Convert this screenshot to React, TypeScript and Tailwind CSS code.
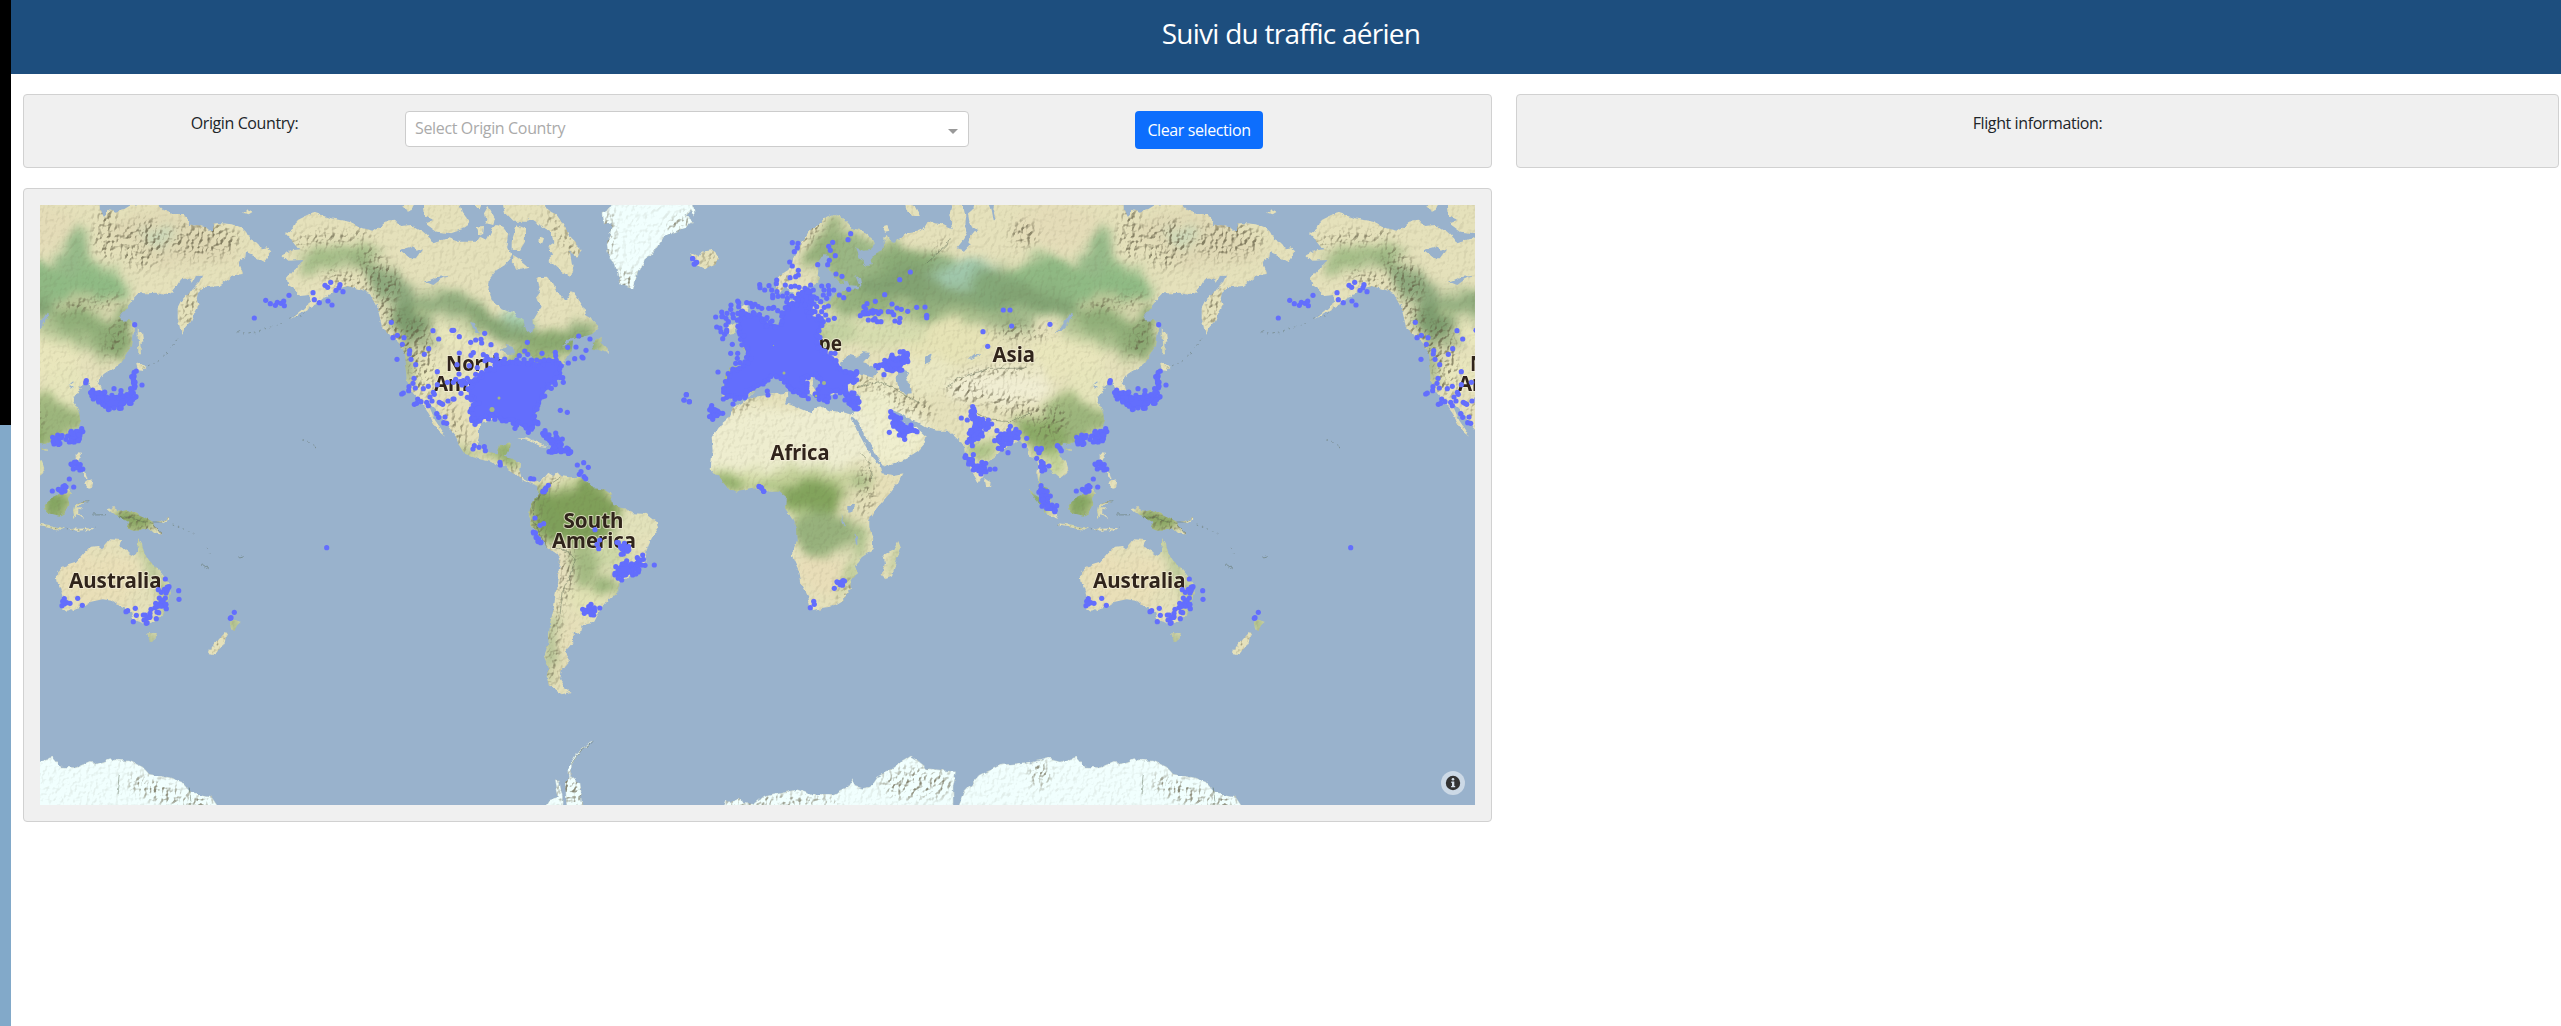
import React from "react";

type Frame = [number, number];

// Tile origins; coordinates below are thirds of a pixel from these corners.
const A: Frame = [30, 190];
const B: Frame = [380, 190];
const C: Frame = [480, 450];
const D: Frame = [680, 190];
const E: Frame = [680, 440];
const F: Frame = [1030, 440];
const G: Frame = [980, 190];

const seg = ([ox, oy]: Frame, s: string) =>
  s
    .trim()
    .split(/\s+/)
    .map((p) => {
      const [x, y] = p.split(",").map(Number);
      return `${(ox + x / 3).toFixed(1)},${(oy + y / 3).toFixed(1)}`;
    })
    .join(" ");

const EURASIA = [
  seg(D, "440,80 462,72 480,78 495,92 515,115 545,120 575,145 583,165 575,180 550,182 525,172 530,185 535,205 550,212 560,228 575,225 572,210 588,190 610,180 612,165 610,145 620,138 628,150 640,155 660,145 680,130 712,125 730,118 745,92 765,100 785,103 800,110 818,118 812,95 808,75 820,30"),
  seg(G, "0,30 430,30 432,60 440,80 450,75 450,55 480,65 500,60 525,45 575,40 605,45 620,60 650,72 685,72 700,90 698,108 720,105 750,112 765,125 770,125 775,100 795,100 830,103 855,112 870,125 880,145 905,160 915,175 935,172 950,185 935,200 925,215 905,205 890,195 870,185 868,205 848,215 862,252 835,255 815,270 790,288 765,290 745,292 725,310 722,330 728,345 715,370 705,395 688,415 678,432 672,415 665,385 665,355 675,335 695,315 710,295 730,275 738,257 720,258 708,280 700,265 675,268 665,285 645,310 625,315 600,308 575,310 550,310 530,330 510,355 490,380 500,392 520,390 535,405 532,440 528,465 515,490 495,520 475,538 455,545 440,555 430,570 425,580 435,590 440,605 430,625 408,628 405,605 400,590 398,575 385,580 375,590 370,602 345,598 355,590 338,585 355,572 345,572 338,585 348,598 378,598 362,612 350,630 362,650 370,672 372,690 365,710 345,730 320,745 295,750 265,765 250,762 240,770 232,782 240,800 258,815 265,835 258,850 240,865 228,855 215,845 200,830 190,835 180,850 178,870 190,890 202,893 213,910 216,930 210,950 195,935 183,910 175,885 172,850 175,830 170,805 160,800 145,795 140,775 130,765 120,745 105,755 85,770 60,785 45,800 25,815"),
  seg(D, "915,835 910,860 895,880 885,860 870,835 858,800 855,765 845,760 825,740 805,722 770,722 735,712 715,700 695,690 668,672 640,660 650,685 672,700 690,715 710,710 720,722 740,740 735,760 715,782 680,805 650,820 610,833 600,820 585,790 565,755 545,715 528,690 515,678 530,660 540,655 538,615 490,608 450,612 435,600 430,570 400,560 395,580 410,610 395,615 370,590 350,550 330,540 310,545 330,570 355,590 350,610 335,600 320,580 295,555 275,555 255,560 240,575 225,600 205,620 180,625 165,632 150,625 125,620 135,580 140,550 150,530 180,528 200,525 205,500 190,470 200,455 235,440 270,415 300,400 320,385 325,355 315,335 345,330 360,345 380,350 420,340 450,335 465,310 500,300 535,298 540,288 500,285 480,278 465,262 450,245 440,230 450,205 450,195 430,193 415,215 418,240 415,280 385,290 370,305 345,322 330,300 315,290 300,310 285,300 285,275 300,255 325,240 340,210 360,170 385,130 410,105"),
].join(" ");

const AFRICA = [
  seg(D, "185,640 215,622 260,615 320,608 325,620 318,640 350,650 395,670 405,655 430,652 450,662 480,665 520,675 515,685 530,720 555,765 575,800 600,830 605,850 640,855 668,850 655,880 630,910"),
  seg(E, "620,170 590,205 568,240 568,265 580,290 578,330 545,352 528,375 537,400 512,420 512,445 490,480 460,498 430,503 400,510 390,500 385,470 365,435 358,395 335,345 350,305 348,265 335,235 315,205 318,170 300,155 270,155 230,145 170,155 140,140 115,110 92,85 98,30 95,-5"),
  seg(D, "120,705 150,680 160,655"),
].join(" ");

const NORTH_AMERICA = [
  seg(A, "768,132 790,115 800,90 825,78 850,67 900,85 960,95 1000,115 1030,122"),
  seg(B, "0,108 15,95 45,92 60,108 95,105 130,125 150,145 160,160 205,145 235,155 290,155 300,140 320,150 335,120 350,105 370,110 385,130 380,160 395,200 375,225 350,240 330,265 325,300 335,330 365,355 400,370 430,390 440,420 455,432 462,410 460,390 475,365 485,350 465,320 480,300 472,262 500,260 520,280 530,310 560,330 575,300 590,320 610,350 615,375 640,390 655,405 645,430 610,440 560,450 545,470 580,450 575,480 560,510 540,525 545,550 510,580 490,610 480,650 465,670 472,700 450,725 435,715 425,690 370,690 330,690 300,700 300,735 295,765 320,785 350,790 360,765 390,760 388,775 375,800 400,808 420,820 418,840 425,865 445,875 470,870 490,885 480,890 455,882 425,870 400,845 375,830 345,820 300,808 250,790 235,765 235,745 205,710 180,670 155,645 148,650 165,690 198,740 180,725 160,700 145,665 125,640 95,605 80,570 75,520 70,480 50,455 25,430 5,410"),
  seg(A, "1050,385 1040,345 1020,310 990,298 950,288 925,295 900,315 880,325 855,345 820,365 780,388 820,355 845,335 840,315 810,318 790,295 775,285 770,265 790,240 810,225 820,210 775,212 757,195 790,180 808,178 790,155"),
].join(" ");

const SOUTH_AMERICA = seg(C, "155,92 175,95 195,80 205,68 220,78 235,66 240,78 270,82 300,80 320,92 340,115 370,118 390,130 400,165 430,175 460,190 500,192 530,215 535,235 515,265 500,300 495,340 470,370 435,385 415,400 415,425 385,450 350,495 340,515 305,525 300,545 278,550 280,575 255,605 270,630 245,660 240,690 255,715 272,726 245,733 210,710 200,680 205,650 192,620 205,580 210,520 222,470 232,390 240,340 235,315 200,290 170,250 150,215 145,200 155,160 175,130 175,110");

const ISLANDS = [
  seg(B, "70,45 105,30 95,60 80,65"),
  seg(B, "130,30 235,30 245,65 268,95 255,115 210,130 170,125 135,100 160,90 135,80"),
  seg(B, "280,30 310,30 300,55 285,50"),
  seg(B, "312,70 325,48 345,85 340,105 318,100"),
  seg(B, "290,110 312,108 310,128 298,135"),
  seg(B, "365,30 430,30 455,75 440,95 400,95 375,70"),
  seg(B, "400,30 490,45 530,75 555,110 570,145 605,180 590,200 570,185 575,220 580,240 572,262 540,240 505,210 520,195 505,170 520,160 515,130 490,110 465,95 440,80 420,60"),
  seg(B, "400,195 415,205 445,230 410,240 398,225"),
  seg(B, "410,105 435,115 435,155 420,180 395,180 395,150"),
  seg(B, "480,140 495,145 490,160 478,155"),
  seg(B, "650,450 665,440 665,458 683,475 683,488 660,482 635,475"),
  seg(B, "415,748 440,742 470,755 502,770 480,768 450,753"),
  seg(D, "35,215 30,190 55,200 65,185 100,180 118,200 105,220 75,238 50,225"),
  seg(D, "185,350 205,340 200,365 215,385 230,410 245,425 240,440 200,445 175,450 190,430 175,410 190,390 180,370"),
  seg(D, "145,410 165,400 172,412 165,428 145,432"),
  seg(D, "672,30 705,50 720,78 700,78 680,60"),
  seg(D, "608,112 622,108 628,122 615,125"),
  seg(E, "655,303 663,325 650,360 635,410 615,418 605,400 615,370 610,345 640,330"),
  seg(E, "915,115 932,125 930,140 918,142"),
  seg(F, "-5,148 20,165 45,185 75,215 88,240 60,230 40,205 15,175"),
  seg(F, "85,250 130,255 180,265 170,270 130,264 90,257"),
  seg(F, "190,264 215,266 262,264 240,280 245,270 210,272"),
  seg(F, "115,190 125,180 155,165 170,150 182,138 195,155 185,175 190,190 175,220 160,227 130,220 118,205"),
  seg(F, "203,198 215,188 250,185 225,193 212,205 235,205 215,215 235,238 222,230 212,222 205,235 201,215"),
  seg(F, "305,205 325,198 330,212 345,215 365,210 410,228 440,245 455,270 468,285 445,280 425,262 405,272 385,272 362,265 370,245 345,232 325,222"),
  seg(F, "450,245 475,240 488,230 490,238 472,248"),
  seg(F, "155,395 170,380 210,368 235,340 255,320 275,318 285,325 295,315 310,298 345,300 340,320 360,335 385,348 393,335 397,290 408,310 415,340 430,365 455,385 475,410 490,435 495,460 480,495 465,530 440,545 420,553 400,545 385,540 375,520 358,508 345,500 320,482 290,478 255,485 235,498 210,503 185,515 165,500 170,470 155,425 152,405"),
  seg(F, "420,580 450,578 445,600 432,608"),
  seg(F, "672,548 685,540 707,545 685,570 675,565"),
  seg(F, "655,580 668,582 645,625 630,643 608,640 612,628"),
  seg(G, "362,787 378,788 372,808 362,812"),
  seg(G, "385,880 400,868 412,876 408,890 395,893"),
  seg(G, "378,838 392,850 398,868 388,860"),
  seg(G, "545,415 558,430 562,455 553,465 555,490 547,490 545,450"),
  seg(G, "540,520 572,530 560,542 545,540"),
  seg(G, "255,775 277,773 268,783"),
  seg(G, "862,68 872,58 888,65 875,73"),
];

const ICE = [
  seg(B, "668,70 690,55 705,30 940,30 945,80 930,60 915,75 942,95 915,115 885,125 850,145 820,190 795,205 775,245 760,298 730,288 715,265 705,225 685,200 680,160 690,130 695,100 672,105"),
  seg(C, "340,872 300,905 275,945 275,980 298,1000 308,1075 260,1075 255,1000 268,985 265,950 290,910 330,875"),
  seg(C, "225,988 238,992 248,1040 246,1075 190,1075 205,1050 235,1040"),
  seg(E, "130,1105 140,1080 150,1088 180,1070 185,1085 225,1090 250,1070 320,1055 350,1048 400,1065 460,1065 500,1045 518,1015 525,1038 545,1045 570,1040 590,1010 640,985 665,965 690,950 715,965 740,985 828,995 820,1040 820,1105"),
  [seg(E, "832,1105 850,1060 900,1005 960,975 1050,965"), seg(F, "0,968 50,955 90,965 140,950 165,980 210,982 255,963 270,972 310,958 370,962 410,980 430,1002 490,1012 530,1025 555,1055 580,1062 615,1068 640,1105")].join(" "),
];

const LAKES = [
  seg(D, "842,30 848,45 856,75 853,105 862,125 850,150 830,175 852,182 868,165 870,140 885,122 895,130 892,118 876,113 866,95 862,75 880,60 885,30"),
  seg(D, "925,30 935,60 942,95 948,80 940,55 945,30"),
  seg(D, "490,505 510,495 530,500 550,487 570,488 560,505 550,515 580,530 592,545 580,563 550,555 530,545 510,548 485,540 480,520"),
  seg(D, "652,545 670,538 690,545 675,570 692,585 695,610 675,612 655,590 650,565"),
  seg(D, "735,500 755,490 750,515 735,522"),
  seg(D, "862,508 880,492 908,493 885,497"),
  seg(D, "525,255 540,265 545,290 535,280"),
  seg(D, "490,270 505,275 512,290 495,292"),
  seg(E, "505,195 525,195 520,215 505,218"),
  seg(E, "485,220 492,250 500,265 488,252"),
  seg(E, "523,275 532,295 532,318 527,310"),
  seg(G, "222,432 245,410 262,385 272,368 277,378 262,405 245,422"),
  seg(B, "60,180 95,170 110,185 130,178 110,205 90,205"),
  seg(B, "135,275 165,262 205,258 180,270 160,285"),
  seg(B, "273,395 285,400 292,420 305,430 290,430"),
  seg(B, "360,485 380,465 400,470 405,490 380,492"),
  seg(B, "395,510 420,490 460,500 440,520"),
];

type Blob = [Frame, number, number, number, number, string, number?];
const BLOBS: Blob[] = [
  [D, 600, 300, 190, 80, "#a9be8c", 0],
  [D, 800, 350, 220, 50, "#a9be8c", 0],
  [D, 660, 245, 160, 75, "#8aab76", -5],
  [D, 500, 200, 110, 75, "#9ab684", 40],
  [D, 430, 170, 40, 90, "#95b07b", 35],
  [D, 560, 320, 80, 60, "#93b07c", 0],
  [D, 740, 290, 200, 55, "#82a272", 0],
  [D, 860, 320, 150, 35, "#86a676", 0],
  [D, 870, 255, 110, 48, "#a0c7ab", 0],
  [D, 735, 370, 18, 60, "#8fae7b", 0],
  [D, 1000, 300, 120, 65, "#7f9f70", 20],
  [D, 480, 420, 60, 45, "#c3d1a0", 0],
  [D, 800, 450, 160, 55, "#e6e3b6", 0],
  [D, 620, 430, 110, 35, "#d5dcae", 0],
  [D, 740, 550, 90, 60, "#e9e7c2", 0],
  [D, 590, 640, 80, 60, "#ececca", 0],
  [D, 640, 740, 110, 80, "#efeece", 0],
  [G, 230, 300, 250, 80, "#a3bf8e", 0],
  [G, 200, 270, 150, 65, "#8fb883", 0],
  [G, 400, 280, 115, 75, "#8fba84", 8],
  [G, 350, 190, 40, 80, "#95b988", 20],
  [G, 60, 300, 90, 60, "#84a878", 0],
  [G, 170, 325, 120, 38, "#82a373", 8],
  [G, 95, 400, 70, 28, "#9ab284", 0],
  [G, 370, 410, 120, 60, "#a6bd8a", 10],
  [G, 370, 405, 90, 40, "#8fae78", 20],
  [G, 490, 440, 45, 90, "#8aa872", 20],
  [G, 400, 340, 110, 14, "#cdcda2", 0],
  [G, 230, 110, 130, 70, "#e4dcb8", 0],
  [G, 650, 150, 190, 70, "#dfd8b4", 10],
  [G, 610, 140, 60, 25, "#cbd8b8", 0],
  [G, 250, 500, 110, 60, "#e9e6bc", 0],
  [G, 330, 600, 60, 70, "#e6e5bb", 0],
  [G, 60, 590, 150, 55, "#f0edd2", 0],
  [G, 250, 645, 45, 35, "#a3ba80", 0],
  [G, 290, 700, 110, 50, "#9cb57c", -10],
  [G, 190, 740, 90, 55, "#8aa966", 20],
  [G, 230, 810, 35, 40, "#bccf92", 0],
  [G, 0, 780, 40, 35, "#a9c184", 0],
  [G, 190, 900, 30, 40, "#8aab6b", 0],
  [D, 180, 560, 90, 60, "#aebf8a", 0],
  [D, 300, 450, 150, 70, "#b3c48f", 0],
  [D, 260, 770, 220, 120, "#eeedcf", 0],
  [D, 440, 740, 140, 100, "#eeedd0", 0],
  [E, 250, 110, 170, 25, "#d3dba7", 0],
  [E, 400, 115, 140, 25, "#c5d19a", 0],
  [E, 150, 135, 50, 24, "#8fae68", 20],
  [E, 260, 140, 60, 16, "#a8c080", 0],
  [E, 400, 175, 105, 52, "#82a35c", 0],
  [E, 430, 275, 95, 60, "#97b17c", 0],
  [E, 350, 215, 25, 20, "#b7cb8f", 0],
  [E, 550, 125, 30, 35, "#9db67c", 0],
  [E, 610, 150, 60, 60, "#e6dfb8", -40],
  [E, 512, 200, 25, 55, "#dfdcb4", 0],
  [E, 545, 300, 25, 45, "#a9c08a", 0],
  [E, 430, 400, 90, 60, "#e8ddb8", 30],
  [E, 515, 410, 20, 60, "#bccb98", 20],
  [E, 645, 350, 10, 60, "#a3ba85", 12],
  [A, 930, 195, 130, 35, "#b3c496", -8],
  [A, 930, 185, 110, 20, "#a0bb84", -8],
  [A, 880, 215, 80, 16, "#a5bd89", -20],
  [A, 1040, 245, 90, 28, "#93ae7b", 25],
  [B, 60, 310, 120, 45, "#8ca87c", 35],
  [B, 90, 400, 55, 80, "#7d9c6e", -40],
  [B, 220, 345, 130, 36, "#a9be90", 12],
  [B, 220, 350, 120, 20, "#8ca97a", 12],
  [B, 360, 415, 130, 34, "#86a573", 20],
  [B, 400, 385, 42, 20, "#a9d3b8", 35],
  [B, 540, 460, 130, 42, "#8aa970", 0],
  [B, 620, 410, 40, 28, "#93ae7c", 0],
  [B, 230, 435, 90, 42, "#e9e7bd", 15],
  [B, 130, 370, 25, 15, "#b5c794", 0],
  [B, 85, 530, 14, 80, "#8fa87a", 0],
  [B, 190, 560, 90, 50, "#e8e6bd", 0],
  [B, 240, 680, 40, 60, "#e6e0b8", -20],
  [B, 450, 580, 120, 100, "#9db57c", 0],
  [B, 370, 790, 50, 30, "#93b06e", 20],
  [B, 250, 780, 60, 14, "#9fb67a", 20],
  [C, 290, 180, 130, 100, "#7f9f59", 10],
  [C, 200, 210, 45, 80, "#7e9f5a", -20],
  [C, 255, 100, 55, 18, "#dcdfb0", -10],
  [C, 460, 235, 75, 50, "#e1e1ba", 0],
  [C, 390, 310, 70, 50, "#cdd7a6", 0],
  [C, 310, 350, 40, 65, "#a2b981", 0],
  [C, 385, 405, 42, 24, "#94b176", 0],
  [C, 325, 460, 60, 45, "#e1e2b4", 0],
  [C, 260, 360, 22, 70, "#e7dfbe", 0],
  [C, 210, 590, 12, 100, "#95b07d", 0],
  [C, 258, 600, 30, 100, "#e5deb8", 10],
  [F, 155, 190, 45, 45, "#83a460", 0],
  [F, 385, 245, 70, 30, "#82a15c", 15],
  [F, 280, 420, 125, 85, "#e9dfb8", 0],
  [F, 440, 385, 14, 65, "#a9c089", -35],
  [F, 402, 320, 12, 35, "#a9c089", 0],
  [F, 478, 480, 14, 75, "#9db77e", 5],
  [F, 435, 592, 22, 22, "#8faa78", 0],
  [F, 690, 555, 24, 20, "#98b27a", 0],
  [F, 30, 190, 35, 45, "#8cab70", 0],
];

// Ranges where the relief shading is strong.
const RANGES: Blob[] = [
  [G, 560, 160, 70, 75, "", 35],
  [G, 450, 130, 35, 80, "", 0],
  [G, 740, 150, 110, 55, "", 0],
  [G, 700, 350, 20, 60, "", 15],
  [G, 400, 340, 110, 16, "", -8],
  [G, 130, 130, 40, 40, ""],
  [G, 120, 430, 90, 22, ""],
  [G, 60, 545, 120, 14, "", -5],
  [G, 110, 650, 110, 30, "", 15],
  [G, 210, 690, 50, 50, ""],
  [G, 480, 440, 25, 70, "", 25],
  [D, 400, 120, 70, 20, "", -50],
  [D, 300, 280, 40, 18, "", -50],
  [D, 560, 580, 70, 18, "", 10],
  [D, 690, 640, 80, 30, "", 25],
  [D, 860, 600, 60, 40, "", 20],
  [D, 770, 180, 10, 50, "", 40],
  [D, 90, 205, 30, 22, ""],
  [D, 180, 650, 60, 14, "", -20],
  [E, 560, 150, 25, 80, ""],
  [E, 500, 460, 14, 50, "", 25],
  [A, 900, 145, 130, 20, "", -5],
  [A, 960, 270, 90, 24, "", 15],
  [A, 1050, 250, 40, 90, "", -35],
  [B, 40, 400, 30, 130, "", -25],
  [B, 120, 500, 40, 120, "", -5],
  [B, 230, 710, 18, 80, "", -25],
  [B, 550, 140, 18, 90, "", -35],
  [B, 400, 840, 12, 60, "", -55],
  [B, 685, 140, 18, 90, ""],
  [B, 900, 100, 45, 22, "", -35],
  [B, 740, 270, 30, 30, ""],
  [C, 165, 190, 12, 90, "", 10],
  [C, 190, 260, 12, 50, "", -35],
  [C, 260, 380, 24, 90, "", 10],
  [C, 225, 580, 16, 150, "", 5],
  [C, 215, 100, 35, 12, "", -50],
  [C, 280, 1010, 50, 60, ""],
  [E, 710, 1030, 110, 45, ""],
  [E, 300, 1085, 180, 18, ""],
  [F, 400, 245, 80, 18, "", 25],
  [F, 640, 610, 20, 40, "", 40],
  [F, 450, 1050, 90, 30, "", 20],
  [F, 30, 1000, 30, 40, ""],
  [F, 580, 1080, 40, 30, ""],
];

// Small islands and relief marks drawn as thin strokes.
const STROKES = [
  seg(F, "340,230 375,232 410,245 440,250 465,282"),
  seg(F, "215,190 250,185"),
  seg(F, "440,246 470,246 488,232"),
  seg(F, "586,373 608,389"),
  seg(F, "697,351 706,349"),
  seg(F, "260,225 300,224"),
  seg(G, "1075,768 1083,778"),
  seg(C, "200,290 160,210 162,160 195,110 240,82"),
  seg(C, "240,490 250,420 268,380 288,325 262,305 225,290"),
  seg(C, "340,874 300,905 272,945"),
  seg(D, "740,220 800,165 808,145"),
  seg(D, "800,590 850,560 930,535 1040,535"),
  seg(D, "885,665 930,690 990,695 1050,670"),
  seg(D, "530,590 600,575 650,600 720,640"),
  seg(D, "575,870 570,820 540,790"),
  seg(F, "340,1005 333,1060"),
  seg(F, "550,1040 555,1090"),
];

const ISLAND_CHAINS = [
  seg(F, "500,252 525,262 540,272 567,287"),
  seg(F, "604,323 615,340 622,350"),
  seg(F, "706,349 718,341"),
  seg(F, "85,252 130,260 180,266 230,270 268,262"),
  seg(G, "562,535 600,515 635,490 672,440"),
  seg(G, "845,425 870,430 900,425 980,400"),
  seg(G, "1000,388 1040,372 1060,350"),
  seg(G, "1042,750 1060,758 1075,766"),
];

// Areas where markers overlap into a solid mass.
const MASSES = [
  seg(B, "310,550 350,530 380,520 440,515 480,522 510,508 540,520 535,545 540,560 512,582 492,605 478,640 463,670 468,700 450,720 435,712 410,698 370,688 335,678 300,688 290,698 275,685 272,660 292,640 270,620 268,592 280,572"),
  seg(D, "180,362 200,372 240,378 262,402 300,408 322,345 350,335 368,305 385,295 398,320 393,380 425,388 428,408 413,420 418,470 440,492 468,512 483,540 528,548 523,570 500,582 488,600 450,608 440,628 408,615 425,590 420,560 380,557 362,562 385,590 378,612 350,608 320,578 290,552 265,562 250,582 210,602 195,618 160,622 132,612 137,580 157,537 190,532 207,500 193,465 183,440 178,400"),
  seg(D, "490,610 520,612 535,635 528,652 508,638"),
  seg(D, "635,675 655,690 670,705 700,715 695,725 665,735 645,710"),
  seg(D, "875,660 885,670 897,695 925,705 905,715 900,740 875,755 870,740 882,700"),
  seg(D, "950,740 970,730 1005,725 1012,745 975,755 968,775 955,755"),
  seg(D, "863,803 875,805 885,825 910,822 915,830 905,845 880,835"),
  seg(D, "1082,820 1100,828 1088,838"),
  seg(E, "1080,140 1095,155 1108,168 1095,185 1125,205 1120,212 1100,205 1080,175"),
  seg(E, "473,427 490,422 483,436"),
  seg(D, "638,500 645,515 662,512 668,490 678,492 678,510 655,542 632,533 595,528"),
  seg(D, "92,652 108,657 122,670 98,688 92,680"),
  seg(D, "548,365 580,368 595,366 555,375"),
  seg(G, "407,602 440,610 450,622 485,617 505,615 525,610 540,590 527,570 538,550 532,560 528,620 500,648 460,652 443,640 412,623"),
  seg(G, "290,742 315,738 312,752 297,762"),
  seg(G, "342,732 378,720 376,740 358,752 342,752"),
  seg(G, "350,820 365,818 378,836 362,828"),
  seg(G, "307,900 325,890 320,902"),
  seg(F, "482,446 491,441 485,453"),
  seg(F, "455,490 470,483 478,498 465,498"),
  seg(F, "430,523 434,533 417,543"),
  seg(C, "414,282 430,287 447,287 430,308"),
  seg(C, "410,355 440,335 450,352 480,325 470,360 445,372 425,380 408,375"),
  seg(C, "311,480 338,477 338,492 318,489"),
  seg(C, "162,248 182,275 175,272"),
  seg(C, "187,121 203,110 195,128"),
  seg(B, "492,727 503,740 545,752 540,773 572,784 512,782 518,762"),
];

const DOT_TEXT: [Frame, string][] = [
  [A, "673,384 707,331 721,341 736,346 742,337 753,340 761,333 763,347 777,316 849,308 853,329 868,338 894,333 906,345 885,286 893,292 902,277 918,301 930,284 927,293 939,305"],
  [B, "34,397 39,443 52,436 72,443 67,463 89,482 88,492 93,508 51,508 107,524 102,565 99,580 87,590 86,602 106,594 65,612 70,609 113,627 103,643 110,640 123,635 140,637 145,647 156,633 130,596 145,589 160,607 150,621 163,613 133,493 146,476 159,422 176,447 216,421 221,421 238,440 238,489 272,457 287,450 303,448 305,459 314,430 333,464 442,457 434,483 418,497 443,493 486,490 526,487 527,497 563,472 588,471 596,438 630,447 618,481 606,501 609,504 584,506 565,519 280,488 273,496 310,494 320,500 349,495 350,505 374,507 172,545 231,524 268,527 292,533 335,510 237,552 227,568 220,577 202,577 172,584 250,572 262,565 287,553 290,570 222,627 204,633 219,627 183,640 178,637 188,643 243,610 170,671 176,682 195,681 191,698 200,700 262,622 275,630 280,645 270,665 275,685 285,703 297,693 541,661 562,667 527,729 488,730 495,722 503,741 518,753 530,745 547,747 507,785 519,785 530,783 543,785 555,783 565,777 572,785 526,768 535,762 279,777 283,767 297,772 313,770 316,782 360,817 361,825 452,866 461,867 592,825 611,818 625,832 603,845 598,853 612,860 617,866 539,549 548,563 550,577 524,579 514,595 405,715 445,727 464,660 473,697 919,614 912,630 928,635 938,206 943,222 949,217 326,540 350,530 380,520 410,510 455,510 470,510 365,515 315,512 325,508 340,512 352,518 345,525 305,548 300,560 270,575 258,580 246,585 240,575 330,535"],
  [C, "165,204 191,221 180,226 345,239 359,270 351,283 356,296 523,345 333,463 359,474 308,478 313,490 341,495 326,470 838,110 845,115 851,124 488,315 472,323 495,346 405,375 425,390 458,375 446,290 475,366 160,246 170,262 183,276 188,125 205,106 490,328 485,345 472,355 415,278 430,312"],
  [D, "337,158 354,160 352,173 343,185 329,216 337,228 355,241 355,255 330,263 347,260 458,157 446,169 451,181 466,197 448,211 443,224 413,224 468,252 486,259 506,298 512,131 504,149 239,284 240,293 254,300 267,287 275,300 290,270 289,281 278,315 291,305 278,323 294,319 308,318 316,285 321,310 333,290 345,288 357,292 347,325 335,318 375,295 392,285 400,300 425,288 432,300 445,287 447,300 461,300 430,315 447,312 440,325 410,325 395,330 422,335 445,348 433,352 410,350 405,365 425,365 437,375 415,378 412,390 445,390 463,385 430,395 478,315 491,323 691,246 659,269 614,314 586,334 561,341 552,350 557,357 636,342 651,354 664,358 683,364 710,352 735,351 740,376 740,383 625,365 635,366 641,374 660,385 658,397 645,393 541,377 550,367 572,365 588,365 602,365 565,390 580,390 592,395 603,395 585,386 173,333 153,345 176,338 200,338 212,340 225,343 235,350 245,355 217,350 152,358 158,372 141,370 125,366 127,378 107,381 110,411 120,414 126,380 138,385 145,395 123,425 138,405 134,433 128,446 140,420 140,425 157,463 152,490 173,490 172,505 167,520 180,518 114,546 266,355 281,352 293,362 277,355 261,383 276,393 247,392 220,368 205,375 187,363 176,350 160,383 310,370 322,325 337,340 350,345 365,330 375,345 380,365 325,357 19,614 12,630 28,635 38,206 43,222 50,217 95,647 98,688 128,670 113,663 159,642 262,603 264,615 340,605 350,600 385,626 375,616 418,628 442,635 440,620 466,620 480,608 472,600 453,490 465,490 612,554 587,527 600,525 612,527 625,528 636,495 670,485 680,500 665,540 630,540 530,548 523,575 130,627 140,622 165,628 180,623 970,360 990,360 995,408 909,425 923,469 1110,403 628,727 674,748 632,665 636,680 643,693 658,735 705,722 693,705 711,725 844,684 862,690 878,650 873,665 908,688 925,690 935,702 925,712 907,738 877,767 862,757 868,730 944,752 951,722 991,709 1008,718 1018,727 1040,745 1033,767 984,788 962,775 991,760 955,775 1070,777 1084,775 1077,786 1070,805 1084,815 1086,843 1107,828 1134,768 855,802 880,794 867,812 880,840 903,852 917,820 930,838 945,837 918,845 507,640 523,655 531,657 537,635 495,630 520,620"],
  [E, "237,139 243,142 251,154 463,445 489,422 481,434 401,484 403,493 391,503 1083,137 1090,150 1111,168 1084,180 1100,205 1124,215 1130,197"],
  [G, "536,404 391,572 389,578 558,585 541,543 527,560 533,575 474,596 495,602 410,600 412,627 440,640 460,657 490,655 520,640 540,620 445,608 430,608 527,600 525,640 290,742 305,735 315,738 294,762 330,748 345,728 360,725 377,716 340,756 355,756 370,735 345,822 360,816 352,837 365,825 377,838 340,867 353,891 289,903 307,898 326,887 322,900 232,767 240,775 244,782 170,777 183,777 177,788"],
  [F, "478,417 489,440 518,452 519,478 457,449 466,457 475,448 460,474 478,474 449,490 465,485 470,498 481,506 447,503 435,508 453,516 458,518 451,536 432,520 432,530 412,525 414,540 421,550 391,526 388,505 365,512 360,515 382,545 215,475 229,496 175,476 170,484 182,488 192,490 168,497 175,492 685,517 673,535 675,533 962,323 20,25 33,28"],
];

const parse = (s: string) => s.split(" ").map((p) => p.split(",").map(Number));

const noise = (n: number) => {
  const v = Math.sin(n * 12.9898) * 43758.5453;
  return v - Math.floor(v);
};

const DOTS = DOT_TEXT.flatMap(([f, s]) => parse(seg(f, s)));

// Scatter markers along the rim of every dense area so its outline is bumpy.
let step = 1;
const RIM = MASSES.flatMap((m) => {
  const pts = parse(m);
  return pts.flatMap(([x, y], i) => {
    const [nx, ny] = pts[(i + 1) % pts.length];
    const count = Math.ceil(Math.hypot(nx - x, ny - y) / 4);
    return Array.from({ length: count }, (_, k) => {
      step += 1;
      const t = (k + noise(step)) / count;
      return [x + (nx - x) * t + (noise(step * 1.7) - 0.5) * 5, y + (ny - y) * t + (noise(step * 2.3) - 0.5) * 5];
    });
  });
});

const Ellipses = ({ items, fill }: { items: Blob[]; fill?: string }) => (
  <>
    {items.map(([f, x, y, rx, ry, c, rot = 0], i) => {
      const cx = f[0] + x / 3;
      const cy = f[1] + y / 3;
      return (
        <ellipse key={i} cx={cx} cy={cy} rx={rx / 3} ry={ry / 3} fill={fill ?? c} transform={`rotate(${rot} ${cx} ${cy})`} />
      );
    })}
  </>
);

const LABELS: [string, number, number, number][] = [
  ["North", 446, 371, 59],
  ["America", 434, 391, 84],
  ["South", 563.5, 527.5, 60],
  ["America", 552, 548, 84],
  ["Africa", 770.5, 460, 59],
  ["Europe", 776, 351, 66],
  ["Asia", 992.5, 362, 42.5],
  ["Australia", 1093, 588, 92.5],
];

function WorldMap() {
  return (
    <svg className="block h-[600px] w-full" viewBox="40 205 1435 600" preserveAspectRatio="none">
      <defs>
        <filter id="coast" filterUnits="userSpaceOnUse" x="240" y="195" width="1100" height="620">
          <feTurbulence type="fractalNoise" baseFrequency="0.13" numOctaves="3" seed="4" result="n" />
          <feDisplacementMap in="SourceGraphic" in2="n" scale="5" xChannelSelector="R" yChannelSelector="G" />
          <feGaussianBlur stdDeviation="0.4" />
        </filter>
        <filter id="soft" filterUnits="userSpaceOnUse" x="240" y="195" width="1100" height="620" colorInterpolationFilters="sRGB">
          <feGaussianBlur stdDeviation="4.5" result="b" />
          <feTurbulence type="fractalNoise" baseFrequency="0.035" numOctaves="3" seed="9" result="n" />
          <feDisplacementMap in="b" in2="n" scale="24" xChannelSelector="R" yChannelSelector="G" result="d" />
          <feGaussianBlur in="d" stdDeviation="3" />
        </filter>
        <filter id="fade" filterUnits="userSpaceOnUse" x="240" y="195" width="1100" height="620">
          <feGaussianBlur stdDeviation="4" />
        </filter>
        <filter id="relief" filterUnits="userSpaceOnUse" x="240" y="195" width="1100" height="620" colorInterpolationFilters="sRGB">
          <feTurbulence type="fractalNoise" baseFrequency="0.24 0.19" numOctaves="3" seed="12" result="n" />
          <feColorMatrix in="n" type="matrix" values="0 0 0 0 0  0 0 0 0 0  0 0 0 0 0  1.4 0 0 0 0" result="h" />
          <feDiffuseLighting in="h" surfaceScale="2.2" diffuseConstant="1" lightingColor="#ffffff" result="l">
            <feDistantLight azimuth="225" elevation="45" />
          </feDiffuseLighting>
          <feColorMatrix in="l" type="matrix" values="0 0 0 0 0.38  0 0 0 0 0.36  0 0 0 0 0.26  -1.8 0 0 0 1.2" />
        </filter>
        <mask id="landmask" maskUnits="userSpaceOnUse" x="240" y="195" width="1100" height="620">
          <g filter="url(#coast)" fill="#fff">
            {[EURASIA, AFRICA, NORTH_AMERICA, SOUTH_AMERICA, ...ISLANDS].map((p, i) => (
              <polygon key={i} points={p} />
            ))}
            <g fill="#000">
              {LAKES.map((p, i) => (
                <polygon key={i} points={p} />
              ))}
            </g>
            {ICE.map((p, i) => (
              <polygon key={i} points={p} />
            ))}
          </g>
        </mask>
        <mask id="rangemask" maskUnits="userSpaceOnUse" x="240" y="195" width="1100" height="620">
          <rect x="240" y="195" width="1100" height="620" fill="#1a1a1a" />
          <g filter="url(#fade)">
            <Ellipses items={RANGES} fill="#bcbcbc" />
          </g>
        </mask>
        <g id="world">
          <g mask="url(#landmask)">
            <rect x="240" y="195" width="1100" height="620" fill="#e5e1bb" />
            <g filter="url(#soft)">
              <Ellipses items={BLOBS} />
            </g>
            <g fill="#f1fffe" stroke="#d5e2de" strokeWidth="1.2" filter="url(#coast)">
              {ICE.map((p, i) => (
                <polygon key={i} points={p} />
              ))}
            </g>
            <g mask="url(#rangemask)">
              <rect x="240" y="195" width="1100" height="620" filter="url(#relief)" />
            </g>
          </g>
          <g fill="none" stroke="#56664f" strokeOpacity="0.5" strokeWidth="0.9" filter="url(#coast)">
            {STROKES.map((p, i) => (
              <polyline key={i} points={p} />
            ))}
            <g strokeDasharray="1.5 4">
              {ISLAND_CHAINS.map((p, i) => (
                <polyline key={i} points={p} />
              ))}
            </g>
          </g>
          <g
            className="font-['Noto_Sans','Open_Sans',sans-serif] text-[22px] font-bold"
            fill="#30241b"
            stroke="#f5f0dc"
            strokeOpacity="0.7"
            strokeWidth="2"
            strokeLinejoin="round"
            paintOrder="stroke"
          >
            {LABELS.map(([t, x, y, w], i) => (
              <text key={i} x={x} y={y} textLength={w} lengthAdjust="spacingAndGlyphs">
                {t}
              </text>
            ))}
          </g>
          <g fill="#636efd" stroke="#636efd" strokeWidth="2" strokeLinejoin="round">
            {MASSES.map((p, i) => (
              <polygon key={i} points={p} />
            ))}
          </g>
          <g fill="#636efd">
            {[...DOTS, ...RIM].map(([x, y], i) => (
              <circle key={i} cx={x} cy={y} r="2.6" />
            ))}
          </g>
          <g fill="#a3b787">
            <circle cx="492" cy="409.5" r="2.5" />
            <circle cx="499" cy="398" r="1.5" />
            <circle cx="784" cy="373" r="1.5" />
            <circle cx="824" cy="383" r="2" />
            <circle cx="773.5" cy="345.5" r="0.6" />
            <circle cx="816" cy="396" r="1.2" />
          </g>
        </g>
      </defs>
      <rect x="40" y="205" width="1435" height="600" fill="#99b2cc" />
      <use href="#world" x="-1024" />
      <use href="#world" />
      <use href="#world" x="1024" />
    </svg>
  );
}

export default function App() {
  return (
    <div className="flex h-[1026px] w-full overflow-hidden bg-white font-['Open_Sans','Noto_Sans',sans-serif] text-base text-[#212529]">
      <div className="flex w-[11px] shrink-0 flex-col">
        <div className="h-[425px] bg-black" />
        <div className="flex-1 bg-[#82a9c9]" />
      </div>
      <div className="flex-1">
        <header className="flex h-[74px] justify-center bg-[#1d4e7e] pt-4 pl-2.5 text-white">
          <h1 className="text-[28px] leading-[34px] tracking-[-0.75px]">Suivi du traffic aérien</h1>
        </header>
        <main className="flex gap-6 pt-5 pr-0.5 pl-3">
          <div className="flex w-[1469px] flex-col gap-5">
            <section className="flex h-[74px] items-start rounded-[4px] border border-[#d1d1d1] bg-[#f0f0f0] pt-4">
              <div className="w-[381px] pl-[60px] text-center tracking-[-0.4px]">Origin Country:</div>
              <div className="flex h-9 w-[564px] items-center justify-between rounded-[4px] border border-[#cccccc] bg-white pr-2.5 pl-[9px] tracking-[-0.35px] text-[#aaaaaa]">
                <span className="pb-0.5">Select Origin Country</span>
                <span className="mt-1 border-x-[5px] border-t-[5px] border-x-transparent border-t-[#999999]" />
              </div>
              <div className="flex flex-1 justify-center pr-[62px]">
                <button className="h-[38px] w-32 rounded-[4px] bg-[#0d6efd] tracking-[-0.4px] text-white">Clear selection</button>
              </div>
            </section>
            <section className="h-[634px] rounded-[4px] border border-[#d1d1d1] bg-[#f0f0f0] p-4">
              <div className="relative">
                <WorldMap />
                <button className="absolute right-2.5 bottom-2.5 h-6 w-6 rounded-full bg-white/50" aria-label="Attribution">
                  <svg className="h-6 w-6" viewBox="0 0 24 24">
                    <circle cx="12" cy="12" r="7.2" fill="#333333" />
                    <circle cx="12" cy="8.3" r="1.3" fill="#d5dfe9" />
                    <path d="M10.3 10.6h3v4.4h0.9v1.3h-4.1V15h0.9v-3.1h-0.7z" fill="#d5dfe9" />
                  </svg>
                </button>
              </div>
            </section>
          </div>
          <section className="h-[74px] flex-1 rounded-[4px] border border-[#d1d1d1] bg-[#f0f0f0] pt-4 text-center tracking-[-0.4px]">
            Flight information:
          </section>
        </main>
      </div>
    </div>
  );
}
